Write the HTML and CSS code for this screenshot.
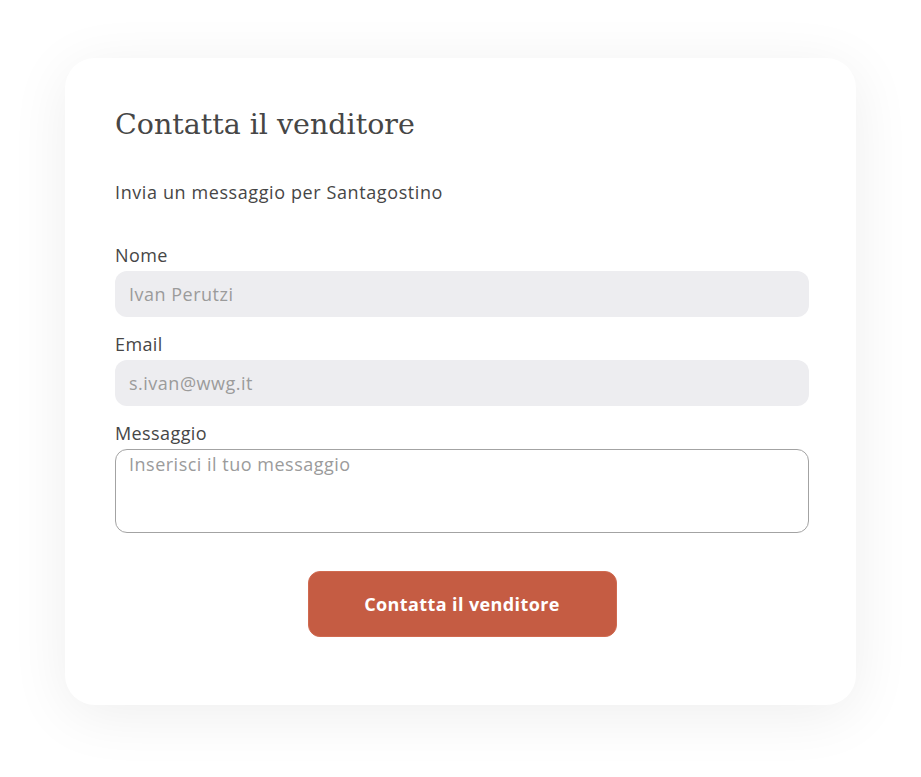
FILE: index.html
```html
<!DOCTYPE html>
<html lang="it">
<head>
  <meta charset="UTF-8">
  <meta name="viewport" content="width=device-width, initial-scale=1.0">
  <title>Contatta il venditore</title>
  <link rel="stylesheet" href="styles.css">
</head>
<body>
  <div class="card">
    <h1>Contatta il venditore</h1>
    <p class="subtitle">Invia un messaggio per Santagostino</p>

    <form class="form">
      <label for="nome">Nome</label>
      <input type="text" id="nome" placeholder="Ivan Perutzi">

      <label for="email">Email</label>
      <input type="email" id="email" placeholder="s.ivan@wwg.it">

      <label for="messaggio">Messaggio</label>
      <textarea id="messaggio" placeholder="Inserisci il tuo messaggio"></textarea>

      <button type="button">Contatta il venditore</button>
    </form>
  </div>
</body>
</html>
```
FILE: styles.css
```css
body {
  font-family: 'Open Sans', 'Noto Sans', sans-serif;
  margin: 0;
  padding: 58px 0 72px 65px;
  background: #ffffff;
}
.card {
  width: 791px;
  height: 647px;
  box-sizing: border-box;
  background: white;
  border-radius: 30px;
  padding: 47px 47px 0 50px;
  box-shadow: 0 10px 60px rgba(0,0,0,0.07);
}
h1 {
  font-family: 'DejaVu Serif', serif;
  font-weight: normal;
  font-size: 28.5px;
  color: #464646;
  margin: 0;
  line-height: 40px;
}
.subtitle {
  margin: 35px 0 0;
  font-size: 18px;
  letter-spacing: 0.6px;
  line-height: 24px;
  color: #464646;
}
.form {
  display: flex;
  flex-direction: column;
  margin-top: 40px;
}
label {
  font-size: 18px;
  letter-spacing: 0.4px;
  line-height: 22px;
  color: #464646;
  margin-bottom: 5px;
}
input, textarea {
  font-family: inherit;
  font-size: 18px;
  letter-spacing: 0.5px;
  color: #464646;
  border-radius: 12px;
  box-sizing: border-box;
  outline: none;
}
input {
  height: 46px;
  border: none;
  background: #ededf0;
  padding: 0 14px;
  margin-bottom: 16px;
}
textarea {
  height: 84px;
  border: 1px solid #a3a3a3;
  background: white;
  padding: 2px 13px;
  resize: none;
}
input::placeholder, textarea::placeholder {
  color: #9b9b9b;
}
button {
  align-self: center;
  width: 309px;
  height: 66px;
  margin-top: 38px;
  background: #c55c43;
  color: white;
  border: 1px solid #d06a50;
  border-radius: 12px;
  font-family: inherit;
  font-weight: bold;
  font-size: 18px;
  letter-spacing: 0.4px;
  cursor: pointer;
}
```
